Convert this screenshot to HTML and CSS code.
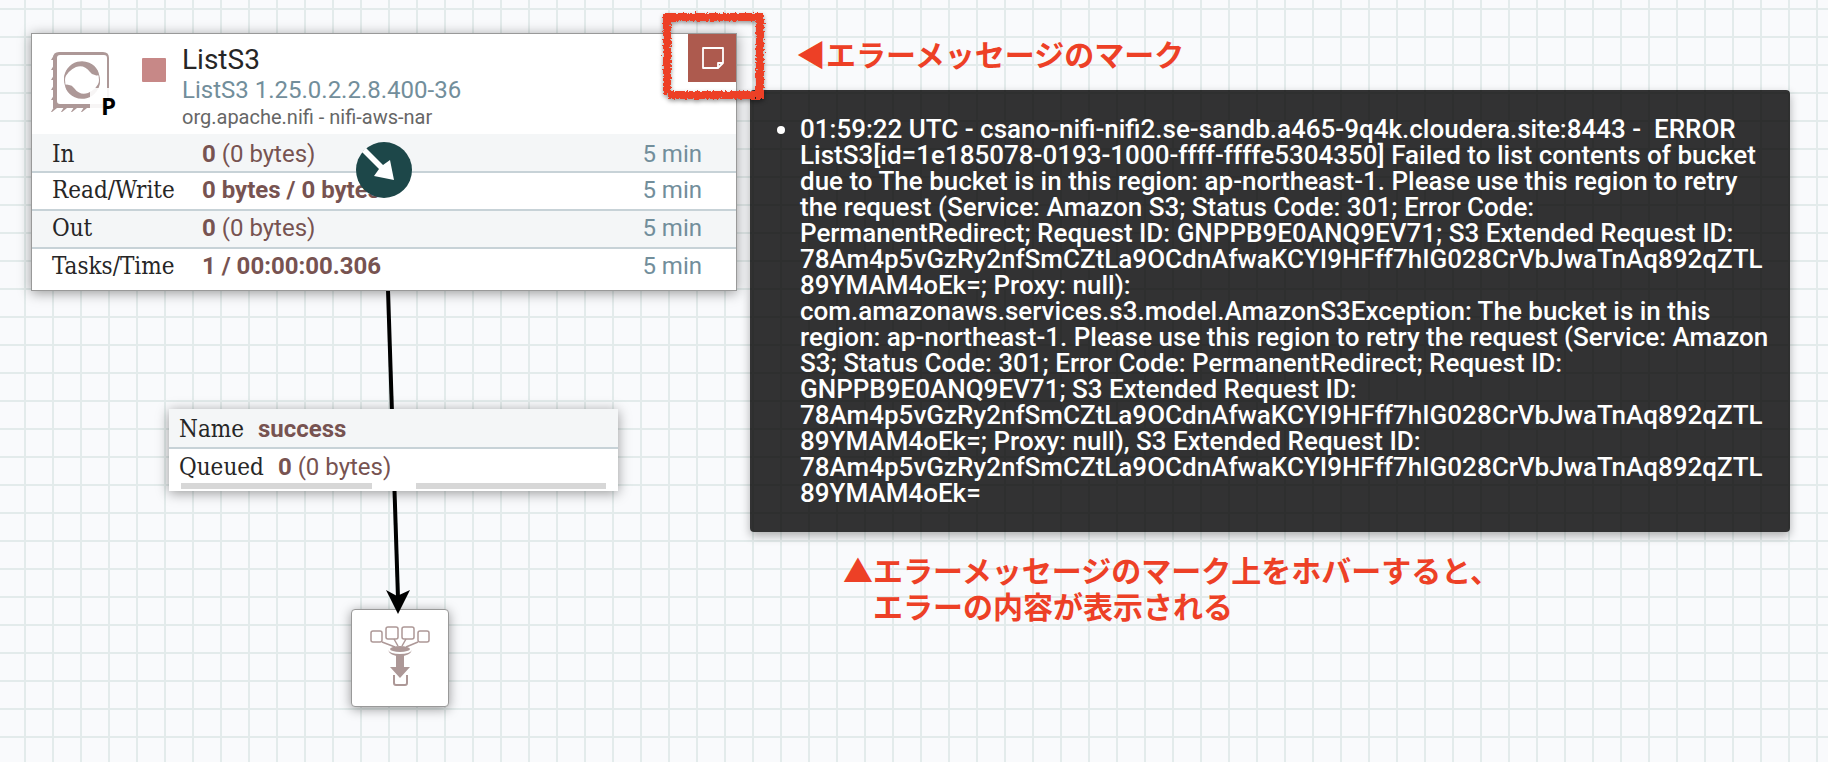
FILE: index.html
```html
<!DOCTYPE html>
<html lang="ja">
<head>
<meta charset="utf-8">
<title>NiFi Flow</title>
<link rel="stylesheet" href="styles.css">
</head>
<body>
<main class="canvas">
  <svg class="connection" width="40" height="326" viewBox="0 0 40 326" aria-hidden="true">
    <path d="M8 2L18 310" stroke="#000" stroke-width="4" fill="none"/>
    <path d="M6 302L17 308L30 302L18 326Z"/>
  </svg>

  <section class="processor">
    <header class="processor-head">
      <div class="processor-icon">
        <svg width="60" height="60" viewBox="0 0 60 60" aria-hidden="true">
          <g fill="#ad9897">
            <path fill-rule="evenodd" d="M8 0H52Q58 0 58 6V52Q58 56 54 56H2V6Q2 0 8 0ZM9 3Q6 3 6 6V49Q6 52 9 52H53Q56 52 56 49V6Q56 3 53 3Z"/>
            <path d="M3 3L0 8H3ZM3 13L0 18H3ZM3 23L0 28H3ZM3 33L0 38H3ZM3 43L0 48H3ZM3 55L0 60H1L6 56ZM13 55L10 60H11L16 56ZM23 55L20 60H21L26 56ZM33 55L30 60H31L36 56Z"/>
            <path d="M13 28A18 18 0 0 1 47 19Q49 25 44 23Q41 23 39 20Q33 12 25 15Q16 19 13 28Z"/>
            <path d="M13 28A18 18 0 0 1 47 19Q49 25 44 23Q41 23 39 20Q33 12 25 15Q16 19 13 28Z" transform="rotate(180 31 28)"/>
          </g>
          <circle cx="31" cy="28" r="17.500" fill="none" stroke="#ad9897"/>
        </svg>
        <span class="primary-badge">P</span>
      </div>
      <span class="stopped"></span>
      <div class="titles">
        <h1 class="name">ListS3</h1>
        <p class="type">ListS3 1.25.0.2.2.8.400-36</p>
        <p class="bundle">org.apache.nifi - nifi-aws-nar</p>
      </div>
      <button class="bulletin" type="button" aria-label="エラーメッセージ">
        <svg width="24" height="24" viewBox="0 0 24 24" fill="none" stroke="#fff" stroke-width="1.800" stroke-linejoin="round" aria-hidden="true">
          <path d="M3 2H23V17L18 22H3ZM23 17H18V22"/>
        </svg>
      </button>
    </header>
    <table class="stats">
      <tr><th scope="row">In</th><td><b>0</b> (0 bytes)</td><td class="window">5 min</td></tr>
      <tr><th scope="row">Read/Write</th><td><b>0 bytes / 0 bytes</b></td><td class="window">5 min</td></tr>
      <tr><th scope="row">Out</th><td><b>0</b> (0 bytes)</td><td class="window">5 min</td></tr>
      <tr><th scope="row">Tasks/Time</th><td><b>1 / 00:00:00.306</b></td><td class="window">5 min</td></tr>
    </table>
    <svg class="connector" width="56" height="56" viewBox="0 0 56 56" aria-hidden="true">
      <circle cx="28" cy="28" r="28" fill="#1d4749"/>
      <path d="M10 6L6 10L23 27L18 34L38 38L34 18L27 23Z" fill="#fff"/>
    </svg>
  </section>

  <section class="queue">
    <div class="queue-row"><span class="label">Name</span><span class="value"><b>success</b></span></div>
    <div class="queue-row"><span class="label">Queued</span><span class="value"><b>0</b> (0 bytes)</span></div>
    <div class="backpressure"><span></span><span></span></div>
  </section>

  <div class="funnel">
    <svg width="60" height="60" viewBox="0 0 60 60" fill="none" stroke="#ad9897" stroke-width="1.500" aria-hidden="true">
      <rect x="1" y="5" width="11" height="11" rx="2"/>
      <rect x="16" y="1" width="12" height="12" rx="2"/>
      <rect x="32" y="1" width="12" height="12" rx="2"/>
      <rect x="48" y="5" width="11" height="11" rx="2"/>
      <path d="M12 16L25 21M24 13L28 20M36 13L32 20M48 16L36 21"/>
      <path d="M18 24Q20 28 30 28T42 24Q40 30 30 30T18 24Z" fill="#ad9897" stroke="none"/>
      <ellipse cx="30" cy="23" rx="10" ry="3" fill="#ad9897" stroke="none"/>
      <path d="M26 29H34V41H40L30 52L20 41H26Z" fill="#ad9897" stroke="none"/>
      <path d="M24 49V57Q24 59 26 59H35Q37 59 37 57V49" stroke-width="2"/>
    </svg>
  </div>

  <div class="tooltip" role="tooltip">
    <ul>
      <li>01:59:22 UTC - csano-nifi-nifi2.se-sandb.a465-9q4k.cloudera.site:8443 - &nbsp;ERROR ListS3[id=1e185078-0193-1000-ffff-ffffe5304350] Failed to list contents of bucket due to The bucket is in this region: ap-northeast-1. Please use this region to retry the request (Service: Amazon S3; Status Code: 301; Error Code: PermanentRedirect; Request ID: GNPPB9E0ANQ9EV71; S3 Extended Request ID: 78Am4p5vGzRy2nfSmCZtLa9OCdnAfwaKCYI9HFff7hIG028CrVbJwaTnAq892qZTL<wbr>89YMAM4oEk=; Proxy: null): com.amazonaws.services.s3.model.AmazonS3Exception: The bucket is in this region: ap-northeast-1. Please use this region to retry the request (Service: Amazon S3; Status Code: 301; Error Code: PermanentRedirect; Request ID: GNPPB9E0ANQ9EV71; S3 Extended Request ID: 78Am4p5vGzRy2nfSmCZtLa9OCdnAfwaKCYI9HFff7hIG028CrVbJwaTnAq892qZTL<wbr>89YMAM4oEk=; Proxy: null), S3 Extended Request ID: 78Am4p5vGzRy2nfSmCZtLa9OCdnAfwaKCYI9HFff7hIG028CrVbJwaTnAq892qZTL<wbr>89YMAM4oEk=</li>
    </ul>
  </div>

  <svg class="crayon" width="108" height="96" viewBox="0 0 108 96" aria-hidden="true">
    <filter id="rough" x="-10%" y="-10%" width="120%" height="120%">
      <feTurbulence type="fractalNoise" baseFrequency="0.5" numOctaves="2" seed="4"/>
      <feDisplacementMap in="SourceGraphic" scale="6" xChannelSelector="R" yChannelSelector="G"/>
    </filter>
    <path d="M8 5V86M5 8H104M101 5V89M9 86H104" fill="none" stroke="#ed4026" stroke-width="8" filter="url(#rough)"/>
  </svg>
  <p class="note note-mark">◀エラーメッセージのマーク</p>
  <p class="note note-hover">▲エラーメッセージのマーク上をホバーすると、<br>　エラーの内容が表示される</p>
</main>
</body>
</html>
```
FILE: styles.css
```css
* { box-sizing: border-box; }

body {
  margin: 0;
  font-family: Roboto, "Liberation Sans", sans-serif;
  font-size: 24px;
}

h1, p, ul { margin: 0; }

.canvas {
  position: relative;
  min-height: 100vh;
  overflow: hidden;
  background-color: #f9fafc;
  background-image:
    linear-gradient(90deg, #e3ebeb 2px, transparent 2px),
    linear-gradient(#e3ebeb 2px, transparent 2px);
  background-size: 28px 28px;
  background-position: 24px 8px;
}

.connection { position: absolute; left: 380px; top: 288px; z-index: 1; }

.processor {
  position: absolute;
  left: 31px;
  top: 33px;
  z-index: 2;
  width: 706px;
  border: 1px solid #999;
  background: #fff;
  box-shadow: 0 2px 12px rgba(0, 0, 0, 0.4);
}

.processor-head {
  display: flex;
  align-items: flex-start;
  height: 100px;
}

.processor-icon {
  position: relative;
  width: 60px;
  height: 60px;
  margin: 18px 0 0 19px;
}

.processor-icon svg { display: block; }

.primary-badge {
  position: absolute;
  left: 39px;
  top: 36px;
  width: 36px;
  height: 36px;
  padding-left: 11px;
  border-radius: 4px;
  background: rgba(255, 255, 255, 0.9);
  font: bold 24px/35px "Open Sans", sans-serif;
  color: #000;
}

.stopped {
  width: 24px;
  height: 24px;
  margin: 24px 0 0 31px;
  border-radius: 1px;
  background: #c78887;
}

.titles { flex: 1; padding: 9px 0 0 16px; }

.name { font-size: 28px; font-weight: 400; line-height: 34px; color: #262626; }
.type { font-size: 24px; line-height: 26px; color: #728e9b; }
.bundle { font-size: 20px; line-height: 28px; color: #666; }

.bulletin {
  display: grid;
  place-items: center;
  width: 48px;
  height: 48px;
  padding: 0;
  border: 0;
  background: #ad5a4e;
}

.stats {
  width: 100%;
  border-collapse: collapse;
  line-height: 28px;
  color: #775351;
}

.stats tr { height: 38px; border-bottom: 2px solid #c7d2d7; }
.stats tr:nth-child(odd) { background: #f4f6f7; }
.stats tr:last-child { height: 42px; border-bottom: 0; }
.stats th, .stats td { padding: 3px 0; text-align: left; vertical-align: top; }
.stats tr:first-child > * { padding: 6px 0 2px; }
.stats tr > th, .stats tr:first-child > th {
  width: 170px;
  padding-left: 20px;
  font-family: "Roboto Slab", "DejaVu Serif Condensed", "DejaVu Serif", serif;
  font-size: 24px;
  font-weight: 400;
  color: #262626;
}
.stats tr > .window, .stats tr:first-child > .window { padding-right: 34px; text-align: right; color: #728e9b; }

.connector { position: absolute; left: 324px; top: 108px; }

.queue {
  position: absolute;
  left: 169px;
  top: 409px;
  z-index: 2;
  width: 449px;
  height: 82px;
  background: #fff;
  box-shadow: 0 2px 12px rgba(0, 0, 0, 0.4);
}

.queue-row {
  display: flex;
  align-items: baseline;
  gap: 14px;
  padding: 6px 10px 4px;
  line-height: 28px;
}
.queue-row:first-child { border-bottom: 2px solid #c7d2d7; background: #f4f6f7; }
.queue-row:nth-child(2) { padding: 4px 10px 2px; }
.label {
  font-family: "Roboto Slab", "DejaVu Serif Condensed", "DejaVu Serif", serif;
  color: #262626;
}
.value { color: #775351; }

.backpressure { display: flex; gap: 44px; padding: 0 12px; }
.backpressure span { flex: 1; height: 6px; background: #d7d7d7; }

.funnel {
  position: absolute;
  left: 351px;
  top: 609px;
  z-index: 0;
  display: grid;
  place-items: center;
  width: 98px;
  height: 98px;
  padding-bottom: 4px;
  border: 1px solid #999;
  border-radius: 4px;
  background: #fff;
  box-shadow: 0 2px 12px rgba(0, 0, 0, 0.4);
}

.tooltip {
  position: absolute;
  left: 750px;
  right: 38px;
  top: 90px;
  z-index: 3;
  padding: 26px 20px 26px 50px;
  border-radius: 4px;
  background: rgba(0, 0, 0, 0.8);
  box-shadow: 0 4px 10px rgba(0, 0, 0, 0.3);
  font-size: 26px;
  font-weight: 500;
  line-height: 26px;
  color: #fff;
}
.tooltip ul { padding: 0; }

.crayon { position: absolute; left: 659px; top: 9px; z-index: 4; filter: drop-shadow(0 2px 2px rgba(0, 0, 0, 0.4)); }

.note {
  position: absolute;
  z-index: 4;
  font-family: "Noto Sans CJK JP", sans-serif;
  font-size: 30px;
  font-weight: 700;
  line-height: 36px;
  color: #ed4026;
}
.note-mark { left: 796px; top: 35px; }
.note-hover { left: 843px; top: 551px; }
```
